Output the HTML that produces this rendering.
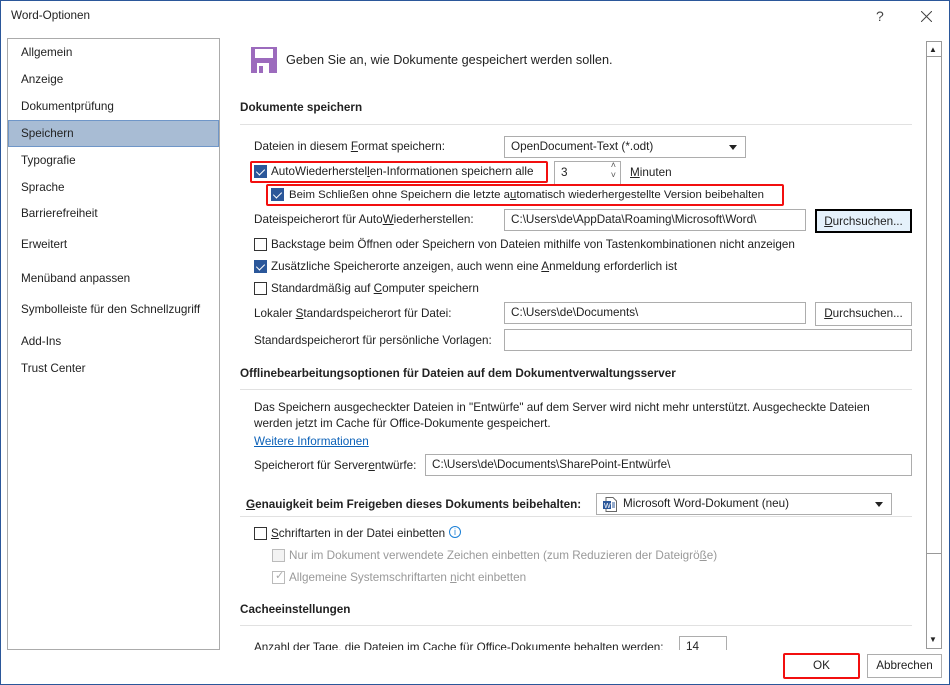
<!DOCTYPE html>
<html><head><meta charset="utf-8"><style>
*{margin:0;padding:0;box-sizing:border-box}
body{width:950px;height:685px;background:#fff;font-family:"Liberation Sans",sans-serif;font-size:11.7px;color:#222;position:relative;overflow:hidden}
.a{position:absolute;white-space:nowrap;line-height:16px}
.win{position:absolute;left:0;top:0;width:950px;height:685px;border:1px solid #2b579a}
.nav{position:absolute;left:7px;top:38px;width:213px;height:612px;border:1px solid #ababab}
.b{font-weight:bold}
.hr{position:absolute;height:1px;background:#e1e1e1}
.box{position:absolute;border:1px solid #adadad;background:#fff;height:22px;line-height:20px;padding-left:6px;white-space:nowrap}
.cb{position:absolute;width:13px;height:13px;border:1px solid #333;background:#fff}
.cb.on{background:#2b579a;border-color:#2b579a}
.cb.on::after{content:"";position:absolute;left:3px;top:1px;width:4px;height:7px;border:solid #fff;border-width:0 1.5px 1.5px 0;transform:rotate(45deg)}
.cb.dis{border-color:#bbb;background:#f3f3f3}
.btn{position:absolute;border:1px solid #adadad;background:#fff;text-align:center;line-height:22px;height:24px}
.red{position:absolute;border:2px solid #f20f0f;border-radius:2px}
.g{color:#999}
u{text-decoration:underline}
.dd{position:absolute;right:8px;top:8px;width:0;height:0;border-left:4px solid transparent;border-right:4px solid transparent;border-top:5px solid #222}
</style></head><body>
<div class="win"></div>
<div class="a" style="left:11px;top:8px">Word-Optionen</div>
<div class="a" style="left:876px;top:8px;font-size:14px;color:#444">?</div>
<svg style="position:absolute;left:921px;top:11px" width="11" height="11"><path d="M0 0L11 11M11 0L0 11" stroke="#444" stroke-width="1"/></svg>

<div class="nav"></div>
<div style="position:absolute;left:8px;top:120px;width:211px;height:27px;background:#a8bcd4;border:1px solid #6f96c8"></div>
<div class="a" style="left:21px;top:45px">Allgemein</div>
<div class="a" style="left:21px;top:72px">Anzeige</div>
<div class="a" style="left:21px;top:99px">Dokumentprüfung</div>
<div class="a" style="left:21px;top:126px">Speichern</div>
<div class="a" style="left:21px;top:153px">Typografie</div>
<div class="a" style="left:21px;top:180px">Sprache</div>
<div class="a" style="left:21px;top:206px">Barrierefreiheit</div>
<div class="a" style="left:21px;top:237px">Erweitert</div>
<div class="a" style="left:21px;top:271px">Menüband anpassen</div>
<div class="a" style="left:21px;top:302px">Symbolleiste für den Schnellzugriff</div>
<div class="a" style="left:21px;top:334px">Add-Ins</div>
<div class="a" style="left:21px;top:361px">Trust Center</div>

<svg style="position:absolute;left:251px;top:47px" width="26" height="26" viewBox="0 0 26 26"><rect width="26" height="26" fill="#9c6bbd"/><rect x="4" y="2" width="18" height="9" fill="#fff"/><rect x="6" y="16" width="12" height="10" fill="#fff"/><rect x="8" y="19" width="4" height="7" fill="#9c6bbd"/></svg>
<div class="a" style="left:286px;top:52px;font-size:12.7px">Geben Sie an, wie Dokumente gespeichert werden sollen.</div>

<div class="a b" style="left:240px;top:100px">Dokumente speichern</div>
<div class="hr" style="left:240px;top:124px;width:672px"></div>

<div class="a" style="left:254px;top:139px">Dateien in diesem <u>F</u>ormat speichern:</div>
<div class="box" style="left:504px;top:136px;width:242px">OpenDocument-Text (*.odt)<div class="dd"></div></div>

<div class="cb on" style="left:254px;top:165px"></div>
<div class="a" style="left:271px;top:164px">AutoWiederherstel<u>l</u>en-Informationen speichern alle</div>
<div class="red" style="left:250px;top:161px;width:298px;height:22px"></div>
<div class="box" style="left:554px;top:161px;width:67px;height:24px;line-height:22px">3<span style="position:absolute;right:4px;top:-2px;font-size:9px;line-height:10px;color:#555">˄<br>˅</span></div>
<div class="a" style="left:630px;top:165px"><u>M</u>inuten</div>

<div class="cb on" style="left:271px;top:188px"></div>
<div class="a" style="left:289px;top:187px;font-size:11.4px">Beim Schließen ohne Speichern die letzte a<u>u</u>tomatisch wiederhergestellte Version beibehalten</div>
<div class="red" style="left:266px;top:184px;width:518px;height:22px"></div>

<div class="a" style="left:254px;top:212px">Dateispeicherort für Auto<u>W</u>iederherstellen:</div>
<div class="box" style="left:504px;top:209px;width:302px">C:\Users\de\AppData\Roaming\Microsoft\Word\</div>
<div class="btn" style="left:815px;top:209px;width:97px;background:#e5f1fb;border:2px solid #000"><u>D</u>urchsuchen...</div>

<div class="cb" style="left:254px;top:238px"></div>
<div class="a" style="left:271px;top:237px">Backstage beim Öffnen oder Speichern von Dateien mithilfe von Tastenkombinationen nicht anzeigen</div>
<div class="cb on" style="left:254px;top:260px"></div>
<div class="a" style="left:271px;top:259px">Zusätzliche Speicherorte anzeigen, auch wenn eine <u>A</u>nmeldung erforderlich ist</div>
<div class="cb" style="left:254px;top:282px"></div>
<div class="a" style="left:271px;top:281px">Standardmäßig auf <u>C</u>omputer speichern</div>

<div class="a" style="left:254px;top:306px">Lokaler <u>S</u>tandardspeicherort für Datei:</div>
<div class="box" style="left:504px;top:302px;width:302px">C:\Users\de\Documents\</div>
<div class="btn" style="left:815px;top:302px;width:97px"><u>D</u>urchsuchen...</div>
<div class="a" style="left:254px;top:333px">Standardspeicherort für persönliche Vorlagen:</div>
<div class="box" style="left:504px;top:329px;width:408px"></div>

<div class="a b" style="left:240px;top:366px">Offlinebearbeitungsoptionen für Dateien auf dem Dokumentverwaltungsserver</div>
<div class="hr" style="left:240px;top:389px;width:672px"></div>
<div class="a" style="left:254px;top:400px">Das Speichern ausgecheckter Dateien in "Entwürfe" auf dem Server wird nicht mehr unterstützt. Ausgecheckte Dateien</div>
<div class="a" style="left:254px;top:416px">werden jetzt im Cache für Office-Dokumente gespeichert.</div>
<div class="a" style="left:254px;top:434px;color:#0b61b8;text-decoration:underline">Weitere Informationen</div>
<div class="a" style="left:254px;top:458px">Speicherort für Server<u>e</u>ntwürfe:</div>
<div class="box" style="left:425px;top:454px;width:487px">C:\Users\de\Documents\SharePoint-Entwürfe\</div>

<div class="a b" style="left:246px;top:497px"><u>G</u>enauigkeit beim Freigeben dieses Dokuments beibehalten:</div>
<div class="box" style="left:596px;top:493px;width:296px;padding-left:26px">Microsoft Word-Dokument (neu)<div class="dd"></div>
<svg style="position:absolute;left:6px;top:3px" width="14" height="15" viewBox="0 0 14 15"><path d="M3 .5h7l3.5 3.5v10.5H3z" fill="#fff" stroke="#666"/><rect x="0" y="4" width="8" height="8" fill="#2b579a"/><text x="1" y="11" font-size="7" fill="#fff" font-family="Liberation Sans">W</text><path d="M9 6h3M9 8h3M9 10h3" stroke="#2b579a"/></svg></div>
<div class="hr" style="left:240px;top:516px;width:672px"></div>

<div class="cb" style="left:254px;top:527px"></div>
<div class="a" style="left:271px;top:526px"><u>S</u>chriftarten in der Datei einbetten</div>
<div style="position:absolute;left:449px;top:526px;width:12px;height:12px;border:1px solid #1a7fd6;border-radius:50%;color:#1a7fd6;font-size:9px;line-height:10px;text-align:center">i</div>
<div class="cb dis" style="left:272px;top:549px"></div>
<div class="a g" style="left:289px;top:548px">Nur im Dokument verwendete Zeichen einbetten (zum Reduzieren der Dateigrö<u>ß</u>e)</div>
<div class="cb dis" style="left:272px;top:571px;background:#fff"><span style="position:absolute;left:2px;top:-3px;color:#aaa;font-size:11px">✓</span></div>
<div class="a g" style="left:289px;top:570px">Allgemeine Systemschriftarten <u>n</u>icht einbetten</div>

<div class="a b" style="left:240px;top:602px">Cacheeinstellungen</div>
<div class="hr" style="left:240px;top:625px;width:672px"></div>
<div style="position:absolute;left:220px;top:636px;width:705px;height:14px;overflow:hidden">
<div class="a" style="left:34px;top:4px">Anzahl der Tage, die Dateien im Cache für Office-Dokumente behalten werden:</div>
<div class="box" style="left:459px;top:0;width:48px;height:24px">14</div></div>

<div style="position:absolute;left:926px;top:41px;width:16px;height:608px;border:1px solid #999;background:#fff"></div>
<div style="position:absolute;left:926px;top:56px;width:16px;height:498px;border:1px solid #999"></div>
<div class="a" style="left:929px;top:42px;font-size:8px">▲</div>
<div class="a" style="left:929px;top:632px;font-size:8px">▼</div>

<div class="btn" style="left:784px;top:654px;width:75px">OK</div>
<div class="red" style="left:783px;top:653px;width:77px;height:26px"></div>
<div class="btn" style="left:867px;top:654px;width:75px">Abbrechen</div>
</body></html>
